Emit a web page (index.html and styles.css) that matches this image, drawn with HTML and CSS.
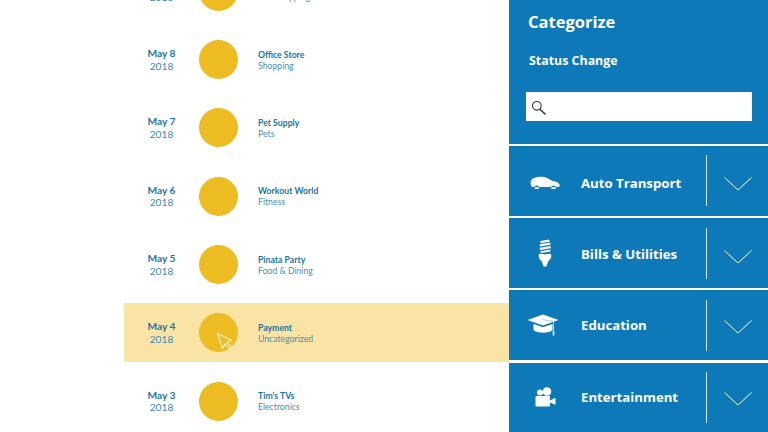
FILE: index.html
```html
<!DOCTYPE html>
<html lang="en">
<head>
<meta charset="utf-8">
<title>Categorize</title>
<link rel="stylesheet" href="styles.css">
</head>
<body>
<main class="list">
  <div class="row">
    <div class="date"><b>May 9</b><span>2018</span></div><div class="dot"></div>
    <div class="info"><b>Grocery Mart</b><span>Gift Shopping</span></div>
  </div>
  <div class="row">
    <div class="date"><b>May 8</b><span>2018</span></div><div class="dot"></div>
    <div class="info"><b>Office Store</b><span>Shopping</span></div>
  </div>
  <div class="row">
    <div class="date"><b>May 7</b><span>2018</span></div><div class="dot"></div>
    <div class="info"><b>Pet Supply</b><span>Pets</span></div>
  </div>
  <div class="row">
    <div class="date"><b>May 6</b><span>2018</span></div><div class="dot"></div>
    <div class="info"><b>Workout World</b><span>Fitness</span></div>
  </div>
  <div class="row">
    <div class="date"><b>May 5</b><span>2018</span></div><div class="dot"></div>
    <div class="info"><b>Pinata Party</b><span>Food &amp; Dining</span></div>
  </div>
  <div class="row active">
    <div class="date"><b>May 4</b><span>2018</span></div>
    <div class="dot">
      <svg class="cursor" viewBox="0 0 18 18"><path d="M1.5 1.5 L15.5 8.5 L11 10.5 L16 15.5 L14 17 L9 12 L6.5 16.5 Z" fill="none" stroke="#fbecc0" stroke-width="1.3" stroke-linejoin="round"/></svg>
    </div>
    <div class="info"><b>Payment</b><span>Uncategorized</span></div>
  </div>
  <div class="row">
    <div class="date"><b>May 3</b><span>2018</span></div><div class="dot"></div>
    <div class="info"><b>Tim's TVs</b><span>Electronics</span></div>
  </div>
</main>
<aside class="panel">
  <header class="head">
    <h1>Categorize</h1>
    <h2>Status Change</h2>
    <div class="search">
      <svg class="glass" viewBox="0 0 16 16"><circle cx="6.2" cy="6.2" r="4.6" fill="none" stroke="#333" stroke-width="1.2"/><path d="M9.6 9.8 L15 15" stroke="#333" stroke-width="1.6" stroke-linecap="round"/></svg>
    </div>
  </header>
  <section class="cat cat-low">
    <div class="slot">
      <svg class="car" viewBox="0 0 30 13"><path d="M1 9 C0 6 1 3.5 3 2.5 C7 0.5 13 0 17 2 C19 3 21 4.5 23 5 C26 5.5 29 6.5 29.5 8.5 C30 10 29.5 11 28 11 L26 11 A2.8 2.8 0 0 0 21 11 L9.5 11 A2.8 2.8 0 0 0 4.5 11 L2.5 11 C1.5 11 1 10 1 9 Z M5 11.2 a2.2 2.2 0 1 0 4 0 Z M21.5 11.2 a2.2 2.2 0 1 0 4 0 Z" fill="#fff"/></svg>
    </div>
    <div class="label">Auto Transport</div>
    <div class="rule"></div>
    <div class="more"><svg class="chev" viewBox="0 0 28 14"><path d="M0.5 0.5 L14 13 L27.5 0.5" fill="none" stroke="#fff" stroke-width="1"/></svg></div>
  </section>
  <section class="cat">
    <div class="slot">
      <svg class="bulb" viewBox="0 0 14 28"><path d="M2.5 2 L11 0.5 L11.8 2.6 L2.5 4.2 Z M1.8 5.3 L12.2 3.6 L12.6 5.8 L1.8 7.6 Z M1.8 8.8 L12.6 7 L12.8 9.2 L1.8 11 Z M2.2 12.2 L12.5 10.4 L12.3 12.4 L3 14 Z" fill="#fff"/><path d="M1 15 C3 14.5 5 15 7 15.5 C9 15 11 14.5 13 15 C13.7 18 13 20 11 21.5 C10 22.5 9.5 24 9 26.5 C8.5 28 5.5 28 5 26.5 C4.5 24 4 22.5 3 21.5 C1 20 0.3 18 1 15 Z" fill="#fff"/></svg>
    </div>
    <div class="label">Bills &amp; Utilities</div>
    <div class="rule"></div>
    <div class="more"><svg class="chev" viewBox="0 0 28 14"><path d="M0.5 0.5 L14 13 L27.5 0.5" fill="none" stroke="#fff" stroke-width="1"/></svg></div>
  </section>
  <section class="cat cat-up">
    <div class="slot slot-cap">
      <svg class="cap" viewBox="0 0 32 22"><path d="M16 0.5 L31.5 6 L16 11.5 L0.5 6 Z" fill="#fff"/><path d="M6.5 10 L16 13.3 L25.5 10 L25.5 16 C22 19.5 10 19.5 6.5 16 Z" fill="#fff"/><path d="M15 5.5 L26.5 7.5 L26.5 18" fill="none" stroke="#a9d2ea" stroke-width="1.1"/><rect x="25.6" y="17" width="1.8" height="4.5" fill="#cfe6f4"/></svg>
    </div>
    <div class="label">Education</div>
    <div class="rule"></div>
    <div class="more"><svg class="chev" viewBox="0 0 28 14"><path d="M0.5 0.5 L14 13 L27.5 0.5" fill="none" stroke="#fff" stroke-width="1"/></svg></div>
  </section>
  <section class="cat cat-up">
    <div class="slot">
      <svg class="cam" viewBox="0 0 21 20"><circle cx="5" cy="5.5" r="3" fill="#fff"/><circle cx="12" cy="4.5" r="4.3" fill="#fff"/><rect x="0.5" y="9" width="14.5" height="10.5" rx="0.8" fill="#fff"/><path d="M15 13.5 L20.5 10.8 L20.5 17.8 L15 15.5 Z" fill="#fff"/></svg>
    </div>
    <div class="label">Entertainment</div>
    <div class="rule"></div>
    <div class="more"><svg class="chev" viewBox="0 0 28 14"><path d="M0.5 0.5 L14 13 L27.5 0.5" fill="none" stroke="#fff" stroke-width="1"/></svg></div>
  </section>
</aside>
</body>
</html>
```
FILE: styles.css
```css
* { box-sizing: border-box; }
html, body { margin: 0; height: 432px; overflow: hidden; background: #fff; }
body { display: flex; width: 768px; font-family: "Open Sans", "Noto Sans", sans-serif; }

.list {
  width: 385px;
  margin-left: 124px;
  margin-top: -38.2px;
  display: flex;
  flex-direction: column;
  gap: 9.33px;
  flex: none;
}
.row { height: 59px; display: flex; align-items: center; flex: none; }
.row.active { background: #f9e4a6; }
.date {
  width: 75px;
  display: flex;
  flex-direction: column;
  align-items: center;
  font-family: Lato, sans-serif;
  font-size: 10.2px;
  line-height: 12.5px;
  color: #1f7cac;
}
.date b { font-weight: 700; color: #1b76a8; }
.date span { color: #3b8ab2; }
.dot { width: 39px; height: 39px; border-radius: 50%; background: #edbc22; position: relative; flex: none; }
.cursor { position: absolute; left: 17px; top: 19px; width: 18px; height: 18px; }
.info {
  margin-left: 20px;
  display: flex;
  flex-direction: column;
  font-family: Lato, sans-serif;
  font-size: 8.7px;
  line-height: 11px;
}
.info b { font-weight: 700; color: #21749f; }
.info span { color: #4a8fae; }

.panel {
  width: 259px;
  flex: none;
  display: flex;
  flex-direction: column;
  gap: 2.5px;
  color: #fff;
}
.head { height: 143.5px; background: #0d79b9; padding: 11px 16px 0 17px; flex: none; }
.head h1 { margin: 0 0 0 2px; font-size: 16.5px; line-height: 21px; font-weight: 700; }
.head h2 { margin: 19px 0 0 3px; font-size: 12.4px; line-height: 20px; font-weight: 700; }
.search { margin-top: 21px; height: 29px; background: #fff; display: flex; align-items: center; padding-left: 5px; }
.glass { width: 15px; height: 15px; margin-top: 2px; }

.cat { height: 69.7px; background: #0d79b9; display: flex; align-items: center; flex: none; }
.slot { width: 72px; display: flex; justify-content: center; flex: none; }
.slot-cap { padding-right: 4px; }
.car { width: 30px; height: 13px; }
.bulb { width: 14px; height: 28px; }
.cap { width: 32px; height: 22px; }
.cam { width: 21px; height: 20px; }
.label { flex: 1; font-size: 13.2px; font-weight: 700; padding-top: 1px; }
.rule { width: 1px; height: 51px; background: #cfe6f4; flex: none; }
.more { width: 61px; display: flex; justify-content: center; padding-top: 7px; flex: none; }
.chev { width: 28px; height: 14px; }
.cat-low .slot { padding-top: 4px; }
.cat-low .label { padding-top: 4px; }
.cat-up .label { padding-top: 0; }
.cat-up .more { padding-top: 4px; }
```
